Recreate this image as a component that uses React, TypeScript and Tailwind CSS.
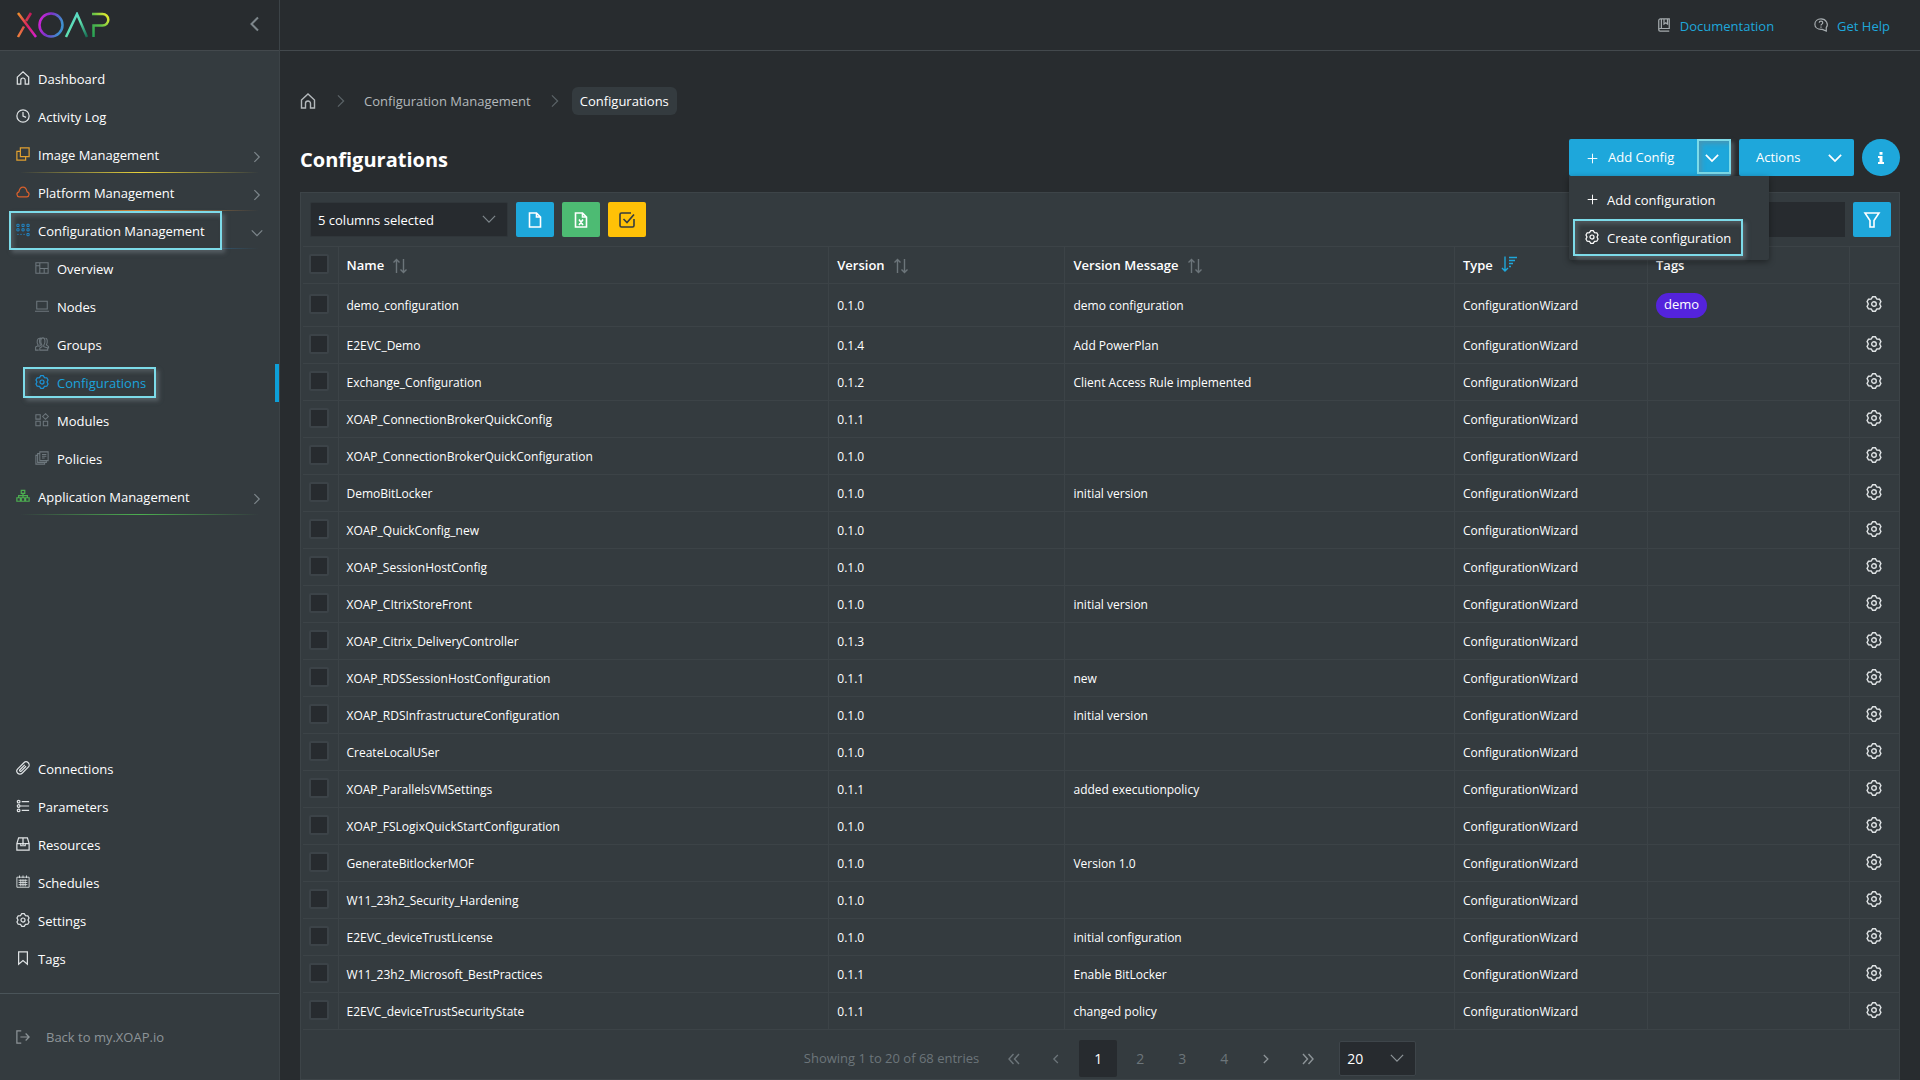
import { useState } from 'react'
import clsx from 'clsx'

// all on a 16 x 16 grid
const ICONS = {
  home: 'M1.5 7 8 1l6.5 6v8h-4V10.500a2.500 2.500 0 0 0-5 0V15h-4z',
  clock: 'M8 1a7 7 0 1 0 0 14A7 7 0 0 0 8 1zM8 3.5V8l3.500 1.500',
  copies: 'M5 1h10v10H5zM5 5H1v10h10v-4',
  cloud: 'M3.700 13.500a2.900 2.900 0 0 1-.4-5.700C4 4.500 5.500 2.500 8 2.500s4 2 4.700 5.300a2.900 2.900 0 0 1-.4 5.700z',
  nodesGrid:
    'M1 1.500h2.500V4H1zM6.800 1.500h2.500V4H6.800zM12.500 1.500H15V4h-2.500zM1 6.500h2.500V9H1zM6.800 6.500h2.500V9H6.800zM12.500 6.500H15V9h-2.500zM1.500 13h1.500M5 13h1.500M8.500 13H10M12.500 12H15v2.500h-2.500z',
  overview: 'M1 2h14v12H1zM5.500 2v12M1 5.500h4.500M5.500 8.500H15M10.500 8.500V14',
  laptop: 'M2 2.500h12v9H2zM0 14h16',
  groups:
    'M6 8.500C4.500 5.500 5 1 7 1M10 9.500c2-2.500 2-8.500-1-8.500s-3 6-1 8.500V11l-2.500 1.500V15h9v-2.500L10 11zM12 1.500c2.500 0 2.500 5 1 7.500l2.500 2V13M6 8.500V10l-2 1M5.500 1.500C2.500 1 1.500 6 3.500 9v1L.7 11.500V15h3.500',
  cog: 'M6.600.8h2.800l1.450 2.250 2.650.15 1.400 2.400L13.700 8l1.200 2.400-1.400 2.400-2.650.15-1.450 2.250H6.600l-1.450-2.250-2.650-.15-1.400-2.400L2.300 8 1.100 5.600l1.400-2.400 2.650-.15zM8 5.700a2.300 2.300 0 1 0 0 4.600 2.300 2.300 0 0 0 0-4.600z',
  modules: 'M1 2h5v5H1zM1 9.500h5v5H1zM9.500 9.500h5v5h-5zM12 .8 15.200 4 12 7.200 8.800 4z',
  policies: 'M5.500 1H15v10H5.500zM5.500 3H3v10h10v-2M3 5H1v10h10v-2M8 4h5M8 6h5M8 8h3',
  sitemap: 'M6 1.500h4V5H6zM8 5v5M3 10V7.500h10V10M1 10h4v4H1zM6 10h4v4H6zM11 10h4v4h-4z',
  link: 'M9 2 2 9a3.500 3.500 0 0 0 5 5l7-7a3.500 3.500 0 0 0-5-5zM10 4.500l-5.500 5.500a1 1 0 0 0 1.500 1.500L11.500 6',
  list: 'M6.500 3H15M5 8h10M6.500 13H15M3 1.500a1.500 1.500 0 1 0 0 3 1.500 1.500 0 0 0 0-3zM3 6.500a1.500 1.500 0 1 0 0 3 1.500 1.500 0 0 0 0-3zM3 11.500a1.500 1.500 0 1 0 0 3 1.500 1.500 0 0 0 0-3z',
  box: 'M1 7.500 3 1h10l2 6.500V15H1zM1 7.500h4.500V10h5V7.500H15M8 1v7M6.500 7 8 8.500 9.500 7',
  calendar: 'M1 2.500h14V14H1zM4 .5v3M8 .5v3M12 .5v3M3 6h10M3 8.500h10M3 11h10M5.500 5v8M8 5v8M10.500 5v8',
  bookmark: 'M3 1h10v14l-5-4-5 4z',
  logout: 'M6 1H1v14h5M5 8h10M11 4l4 4-4 4',
  book: 'M2 13V3a2 2 0 0 1 2-2h10v11H3.500a1.500 1.500 0 0 0 0 3H14M5 1v11M8 1v6l2-1.500L12 7V1',
  help: 'M8 1C4 1 1 3.500 1 7s3 6 7 6h1.500l4.500 2V11c3-4 0-10-6-10zM6 5.500C6 3 10 3 10 5.500 10 7 8 7 8 8.500M8 9.700v1.300',
  left: 'M11 1.500 4.500 8l6.500 6.500',
  right: 'M4.500 1.500 11 8l-6.500 6.500',
  down: 'M1 4.500 8 11.500l7-7',
  plus: 'M8 1v14M1 8h14',
  file: 'M2.500 1h7l4 4v10h-11zM9.500 1v4h4',
  excel: 'M2.500 1h7l4 4v10h-11zM9.500 1v4h4M6 7.500l4 5.500M10 7.500 6 13',
  check:
    'M15 7v6.500a1.500 1.500 0 0 1-1.500 1.500h-11A1.500 1.500 0 0 1 1 13.500v-11A1.500 1.500 0 0 1 2.500 1H12M4.500 7 8 10.500 15 2.500',
  filter: 'M1 1h14l-5 7.500V15H6V8.500z',
  sort: 'M4.500 15V1.500M1.500 4.500l3-3 3 3M11.500 1v13.500M8.500 11.500l3 3 3-3',
  sortDesc: 'M4 .5V15M1 12l3 3 3-3M8 1.500h8M8 4.500h6M8 7.500h4M8 10.500h2',
  first: 'M7.500 3 3 8l4.500 5M13 3 8.500 8l4.500 5',
  last: 'M3 3l4.500 5L3 13M8.500 3 13 8l-4.500 5',
}

type IconName = keyof typeof ICONS

type IconProps = {
  name: IconName
  className?: string
  strokeWidth?: number
}

function Icon({ name, className, strokeWidth = 1.4 }: IconProps) {
  return (
    <svg
      viewBox="0 0 16 16"
      fill="none"
      stroke="currentColor"
      strokeWidth={strokeWidth}
      className={clsx('shrink-0 overflow-visible', className)}
      aria-hidden="true"
    >
      <path d={ICONS[name]} />
    </svg>
  )
}

function Logo() {
  return (
    <svg viewBox="0 0 94 26" fill="none" strokeWidth="2.500" className="h-[26px] w-[94px]" role="img" aria-label="XOAP">
      <defs>
        <linearGradient id="logoX1" x1="0" y1="0" x2="1" y2="1">
          <stop offset="0" stopColor="#f0922b" />
          <stop offset="0.5" stopColor="#e0245e" />
          <stop offset="1" stopColor="#d31fd0" />
        </linearGradient>
        <linearGradient id="logoX2" x1="1" y1="0" x2="0" y2="1">
          <stop offset="0" stopColor="#c2185b" />
          <stop offset="1" stopColor="#f0803b" />
        </linearGradient>
        <linearGradient id="logoO" x1="0" y1="0" x2="1" y2="0.3">
          <stop offset="0" stopColor="#e01fd8" />
          <stop offset="0.5" stopColor="#7a35c9" />
          <stop offset="1" stopColor="#3f8fd0" />
        </linearGradient>
        <linearGradient id="logoA" x1="0" y1="0" x2="1" y2="1">
          <stop offset="0" stopColor="#55d3d8" />
          <stop offset="0.5" stopColor="#5fe0b0" />
          <stop offset="1" stopColor="#146b50" />
        </linearGradient>
        <linearGradient id="logoP" x1="0" y1="1" x2="1" y2="0">
          <stop offset="0" stopColor="#1f9d57" />
          <stop offset="0.5" stopColor="#5cbf4a" />
          <stop offset="1" stopColor="#f0ee2c" />
        </linearGradient>
      </defs>
      <path d="M2 1l18 24" stroke="url(#logoX1)" />
      <path d="M15 1l-5 8M8 14.500 2 25" stroke="url(#logoX2)" />
      <circle cx="35" cy="13" r="11.500" stroke="url(#logoO)" />
      <path d="M50 25 61 2l10 23" stroke="url(#logoA)" />
      <path d="M76 2h10.500a5.800 5.800 0 0 1 0 11.600H77.500V25" stroke="url(#logoP)" />
    </svg>
  )
}

type NavItem = {
  label: string
  icon: IconName
  color?: string
  open?: boolean
  line?: string
}

const mainNav: NavItem[] = [
  { label: 'Dashboard', icon: 'home' },
  { label: 'Activity Log', icon: 'clock' },
  { label: 'Image Management', icon: 'copies', color: 'text-[#e0a030]', line: 'via-[#e8d23a]' },
  { label: 'Platform Management', icon: 'cloud', color: 'text-[#d9602c]', line: 'via-[#d98a3a]' },
  {
    label: 'Configuration Management',
    icon: 'nodesGrid',
    color: 'text-[#1f8fd6]',
    open: true,
    line: 'via-[#2a86c4]',
  },
]

const subNav: NavItem[] = [
  { label: 'Overview', icon: 'overview' },
  { label: 'Nodes', icon: 'laptop' },
  { label: 'Groups', icon: 'groups' },
  { label: 'Configurations', icon: 'cog', open: true },
  { label: 'Modules', icon: 'modules' },
  { label: 'Policies', icon: 'policies' },
]

const applicationNav: NavItem = {
  label: 'Application Management',
  icon: 'sitemap',
  color: 'text-[#4caf50]',
  line: 'via-[#4caf50]',
}

const bottomNav: NavItem[] = [
  { label: 'Connections', icon: 'link' },
  { label: 'Parameters', icon: 'list' },
  { label: 'Resources', icon: 'box' },
  { label: 'Schedules', icon: 'calendar' },
  { label: 'Settings', icon: 'cog' },
  { label: 'Tags', icon: 'bookmark' },
]

// bright frame that marks the steps of the tour
function Frame({ className }: { className: string }) {
  return (
    <span
      className={clsx(
        'pointer-events-none absolute border-2 border-[#7ddbe9] shadow-[3px_3px_4px_rgba(120,130,135,0.5),inset_3px_3px_4px_rgba(120,130,135,0.4)]',
        className
      )}
    />
  )
}

function NavLink({ item }: { item: NavItem }) {
  return (
    <li className="relative">
      <a href="#" className="flex h-[38px] items-center gap-2 px-4 pt-[2px] text-white">
        <Icon
          name={item.icon}
          strokeWidth={item.icon === 'calendar' || item.icon === 'nodesGrid' ? 1 : 1.4}
          className={clsx('mb-1 size-[14px]', item.color ?? 'text-[#dfe3e5]')}
        />
        <span className="flex-1 whitespace-nowrap">{item.label}</span>
        {item.line ? (
          <Icon name={item.open ? 'down' : 'right'} className="mt-[2px] size-3 text-[#7d868b]" strokeWidth={1.6} />
        ) : null}
      </a>
      {item.line ? (
        <span
          className={clsx(
            'absolute right-5 bottom-px left-5 h-px bg-linear-to-r from-transparent to-transparent',
            item.line
          )}
        />
      ) : null}
      {item.open ? <Frame className="top-[-1px] left-[9px] h-[39px] w-[213px]" /> : null}
    </li>
  )
}

function SubLink({ item }: { item: NavItem }) {
  return (
    <li className="relative">
      <a
        href="#"
        className={clsx(
          'flex h-[38px] items-center gap-2 pt-[2px] pl-[35px]',
          item.open ? 'border-r-4 border-[#0d9fd8] text-[#1ba3dc]' : 'text-white'
        )}
      >
        <Icon
          name={item.icon}
          strokeWidth={item.open ? 1.4 : 1.2}
          className={clsx('mb-1 size-[14px]', item.open ? 'text-[#1b93d8]' : 'text-[#6d777d]')}
        />
        {item.label}
      </a>
      {item.open ? <Frame className="top-[3px] left-[23px] h-[31px] w-[133px]" /> : null}
    </li>
  )
}

function Sidebar() {
  return (
    <aside className="sticky top-0 flex h-screen w-[280px] shrink-0 flex-col border-r border-[#3c4347] bg-[#343b3f]">
      <div className="flex h-[51px] shrink-0 items-start justify-between border-b border-[#43494d] bg-[#282c2f] pt-3 pr-4 pl-4">
        <Logo />
        <button type="button" aria-label="Collapse menu" className="pt-1 text-[#7d868b]">
          <Icon name="left" className="size-4" strokeWidth={2} />
        </button>
      </div>
      <nav className="flex flex-1 flex-col pt-[9px] pb-[15px]">
        <ul>
          {mainNav.map((item) => (
            <NavLink key={item.label} item={item} />
          ))}
          {subNav.map((item) => (
            <SubLink key={item.label} item={item} />
          ))}
          <NavLink item={applicationNav} />
        </ul>
        <ul className="mt-auto">
          {bottomNav.map((item) => (
            <NavLink key={item.label} item={item} />
          ))}
        </ul>
      </nav>
      <div className="h-[87px] shrink-0 border-t border-[#4a5459]">
        <a href="#" className="flex h-[86px] items-center gap-4 pt-[2px] pl-4 text-[#8d9498]">
          <Icon name="logout" className="mb-[2px] size-[14px]" />
          Back to my.XOAP.io
        </a>
      </div>
    </aside>
  )
}

type Config = {
  name: string
  version: string
  message?: string
  tag?: string
}

const configs: Config[] = [
  { name: 'demo_configuration', version: '0.1.0', message: 'demo configuration', tag: 'demo' },
  { name: 'E2EVC_Demo', version: '0.1.4', message: 'Add PowerPlan' },
  { name: 'Exchange_Configuration', version: '0.1.2', message: 'Client Access Rule implemented' },
  { name: 'XOAP_ConnectionBrokerQuickConfig', version: '0.1.1' },
  { name: 'XOAP_ConnectionBrokerQuickConfiguration', version: '0.1.0' },
  { name: 'DemoBitLocker', version: '0.1.0', message: 'initial version' },
  { name: 'XOAP_QuickConfig_new', version: '0.1.0' },
  { name: 'XOAP_SessionHostConfig', version: '0.1.0' },
  { name: 'XOAP_CItrixStoreFront', version: '0.1.0', message: 'initial version' },
  { name: 'XOAP_Citrix_DeliveryController', version: '0.1.3' },
  { name: 'XOAP_RDSSessionHostConfiguration', version: '0.1.1', message: 'new' },
  { name: 'XOAP_RDSInfrastructureConfiguration', version: '0.1.0', message: 'initial version' },
  { name: 'CreateLocalUSer', version: '0.1.0' },
  { name: 'XOAP_ParallelsVMSettings', version: '0.1.1', message: 'added executionpolicy' },
  { name: 'XOAP_FSLogixQuickStartConfiguration', version: '0.1.0' },
  { name: 'GenerateBitlockerMOF', version: '0.1.0', message: 'Version 1.0' },
  { name: 'W11_23h2_Security_Hardening', version: '0.1.0' },
  { name: 'E2EVC_deviceTrustLicense', version: '0.1.0', message: 'initial configuration' },
  { name: 'W11_23h2_Microsoft_BestPractices', version: '0.1.1', message: 'Enable BitLocker' },
  { name: 'E2EVC_deviceTrustSecurityState', version: '0.1.1', message: 'changed policy' },
]

const BORDERS = 'border-b border-l border-[#3c4347]'
const CELL = clsx(BORDERS, 'px-2 pt-[2px] text-left')
const CHECK_CELL = 'border-b border-[#3c4347] pb-[2px] pl-[6px]'

function Checkbox({ label }: { label: string }) {
  return (
    <input
      type="checkbox"
      aria-label={label}
      className="block size-5 appearance-none rounded-xs border-2 border-[#3c4348] bg-[#272b2f] checked:bg-[#1ea7db]"
    />
  )
}

function SortHeader({ label, active }: { label: string; active?: boolean }) {
  return (
    <th scope="col" className={clsx(CELL, 'font-semibold')}>
      <button type="button" className="flex items-center gap-2">
        {label}
        <Icon
          name={active ? 'sortDesc' : 'sort'}
          className={clsx('size-4', active ? 'mb-1 text-[#1ea7db]' : 'text-[#6c757a]')}
        />
      </button>
    </th>
  )
}

function ConfigTable() {
  return (
    <table className="w-full table-fixed border-collapse border-t border-[#3c4347] text-xs text-white">
      <colgroup>
        <col className="w-[35px]" />
        <col className="w-[30.75%]" />
        <col className="w-[14.8%]" />
        <col className="w-[24.4%]" />
        <col className="w-[12.1%]" />
        <col />
        <col className="w-[50px]" />
      </colgroup>
      <thead className="text-[13px]">
        <tr className="h-[37px]">
          <th className={CHECK_CELL}>
            <Checkbox label="Select all" />
          </th>
          <SortHeader label="Name" />
          <SortHeader label="Version" />
          <SortHeader label="Version Message" />
          <SortHeader label="Type" active />
          <th scope="col" className={clsx(CELL, 'font-semibold')}>Tags</th>
          <th className={CELL} />
        </tr>
      </thead>
      <tbody>
        {configs.map((config) => (
          <tr key={config.name} className={config.tag ? 'h-[43px]' : 'h-[37px]'}>
            <td className={CHECK_CELL}>
              <Checkbox label={`Select ${config.name}`} />
            </td>
            <td className={CELL}>{config.name}</td>
            <td className={CELL}>{config.version}</td>
            <td className={CELL}>{config.message}</td>
            <td className={CELL}>ConfigurationWizard</td>
            <td className={clsx(BORDERS, 'px-2')}>
              {config.tag ? (
                <span className="inline-flex h-[25px] items-center rounded-full bg-[#5423dc] px-2 text-[13px]">
                  {config.tag}
                </span>
              ) : null}
            </td>
            <td className={clsx(BORDERS, 'pb-[2px]')}>
              <button type="button" aria-label={`Settings of ${config.name}`} className="mx-auto block text-[#dfe3e5]">
                <Icon name="cog" className="size-4" />
              </button>
            </td>
          </tr>
        ))}
      </tbody>
    </table>
  )
}

function Paginator() {
  const [page, setPage] = useState(1)
  const pageButton = 'flex h-[37px] w-[38px] items-center justify-center rounded-xs text-sm'

  return (
    <div className="flex items-center justify-center gap-1 pt-[10px] pb-[2px] pl-[18px] text-[#6c757a]">
      <span className="mr-3">Showing 1 to 20 of 68 entries</span>
      <button type="button" aria-label="First page" className={pageButton}>
        <Icon name="first" className="size-4" />
      </button>
      <button type="button" aria-label="Previous page" className={pageButton}>
        <Icon name="left" className="size-[10px]" strokeWidth={2} />
      </button>
      {[1, 2, 3, 4].map((n) => (
        <button
          key={n}
          type="button"
          onClick={() => setPage(n)}
          className={clsx(pageButton, n === page && 'bg-[#272b2f] text-white')}
        >
          {n}
        </button>
      ))}
      <button type="button" aria-label="Next page" className={clsx(pageButton, 'text-[#8d9498]')}>
        <Icon name="right" className="size-[10px]" strokeWidth={2} />
      </button>
      <button type="button" aria-label="Last page" className={clsx(pageButton, 'text-[#8d9498]')}>
        <Icon name="last" className="size-4" />
      </button>
      <div className="relative ml-2">
        <select
          aria-label="Rows per page"
          className="h-[35px] w-[77px] appearance-none rounded-xs border border-[#3e454a] bg-[#272b2f] pl-[7px] text-sm text-white"
          defaultValue="20"
        >
          <option>10</option>
          <option>20</option>
          <option>50</option>
        </select>
        <Icon name="down" className="pointer-events-none absolute top-[10px] right-3 size-[14px] text-[#8d9498]" />
      </div>
    </div>
  )
}

const TOOL_BUTTON = 'flex h-[35px] w-[38px] items-center justify-center rounded-xs'

function Toolbar() {
  return (
    <div className="flex items-center gap-2 py-[9px] pr-2 pl-[7px]">
      <div className="relative">
        <select
          aria-label="Columns"
          className="block h-[35px] w-[198px] appearance-none rounded-xs border border-[#30363a] bg-[#272b2f] pt-[2px] pl-[7px] text-white"
        >
          <option>5 columns selected</option>
        </select>
        <Icon name="down" className="pointer-events-none absolute top-[10px] right-3 size-[14px] text-[#7d868b]" />
      </div>
      <button type="button" aria-label="Export as CSV" className={clsx(TOOL_BUTTON, 'bg-[#1ea7db] text-white')}>
        <Icon name="file" className="size-4" strokeWidth={1.6} />
      </button>
      <button type="button" aria-label="Export as Excel" className={clsx(TOOL_BUTTON, 'bg-[#4dbb73] text-white')}>
        <Icon name="excel" className="size-4" strokeWidth={1.6} />
      </button>
      <button type="button" aria-label="Export selection" className={clsx(TOOL_BUTTON, 'bg-[#ffc107] text-[#343b3f]')}>
        <Icon name="check" className="size-4" strokeWidth={1.6} />
      </button>
      <input
        type="text"
        aria-label="Search"
        className="ml-auto h-[35px] w-[240px] bg-[#272b2f] px-2 text-white outline-none"
      />
      <button type="button" aria-label="Filter" className={clsx(TOOL_BUTTON, 'bg-[#1ea7db] text-white')}>
        <Icon name="filter" className="size-4" strokeWidth={1.6} />
      </button>
    </div>
  )
}

function AddConfigMenu() {
  const menuItem = 'flex h-[38px] w-full items-center gap-2 pt-[2px] pl-4'

  return (
    <ul
      role="menu"
      className="absolute top-full left-0 z-10 w-[200px] rounded-b-xs bg-[#343b3f] pt-[5px] pb-[3px] text-white shadow-[0_2px_6px_rgba(0,0,0,0.4)]"
    >
      <li>
        <button type="button" role="menuitem" className={menuItem}>
          <span className="mb-1 flex w-[14px] justify-center">
            <Icon name="plus" className="size-[11px]" />
          </span>
          Add configuration
        </button>
      </li>
      <li className="relative">
        <button type="button" role="menuitem" className={menuItem}>
          <Icon name="cog" className="mb-1 size-[14px]" />
          Create configuration
        </button>
        <Frame className="top-0 left-1 h-[37px] w-[170px]" />
      </li>
    </ul>
  )
}

export default function App() {
  const [menuOpen, setMenuOpen] = useState(true)

  return (
    <div className="flex min-h-screen bg-[#282c2f] font-['Open_Sans','Noto_Sans',sans-serif] text-[13px]">
      <Sidebar />
      <div className="flex min-w-0 flex-1 flex-col">
        <header className="flex h-[51px] shrink-0 items-center justify-end gap-10 border-b border-[#43494d] pt-[3px] pr-[30px] text-[#1ea7db]">
          <a href="#" className="flex items-center gap-[9px]">
            <Icon name="book" className="mb-1 size-[14px] text-[#a5abae]" />
            Documentation
          </a>
          <a href="#" className="flex items-center gap-[9px]">
            <Icon name="help" className="mb-1 size-[14px] text-[#a5abae]" />
            Get Help
          </a>
        </header>

        <main className="flex-1 px-5 pt-9">
          <nav aria-label="Breadcrumb" className="flex h-7 items-center text-[#b4b9bc]">
            <a href="#" aria-label="Home">
              <Icon name="home" className="size-4" />
            </a>
            <Icon name="right" className="mx-4 ml-[18px] size-[14px] text-[#5b6367]" />
            <a href="#" className="pt-[2px]">Configuration Management</a>
            <Icon name="right" className="mr-[10px] ml-[17px] size-[14px] text-[#5b6367]" />
            <span className="rounded-md bg-[#343b3f] px-2 pt-[5px] pb-[3px] text-white">Configurations</span>
          </nav>

          <div className="flex items-start justify-between pt-6 pb-4">
            <h1 className="pt-[5px] text-xl leading-8 font-bold text-white">Configurations</h1>
            <div className="flex gap-2 text-white">
              <div className="relative flex h-[37px]">
                <button type="button" className="flex w-32 items-center gap-[10px] rounded-l-xs bg-[#1ea7db] pt-px pl-[18px]">
                  <Icon name="plus" className="size-[11px]" />
                  Add Config
                </button>
                <button
                  type="button"
                  aria-label="More add options"
                  onClick={() => setMenuOpen(!menuOpen)}
                  className="relative flex w-[34px] items-center rounded-r-xs bg-[#1ea7db] pl-2"
                >
                  <Icon name="down" className="size-[14px]" strokeWidth={2} />
                  <Frame className="inset-x-0 top-0 h-[35px]" />
                </button>
                {menuOpen ? <AddConfigMenu /> : null}
              </div>
              <button
                type="button"
                className="flex h-[37px] w-[115px] items-center justify-between rounded-xs bg-[#1ea7db] pt-px pr-3 pl-[17px]"
              >
                Actions
                <Icon name="down" className="size-[14px]" strokeWidth={2} />
              </button>
              <button
                type="button"
                aria-label="Information"
                className="flex h-[37px] w-[38px] items-center justify-center rounded-full bg-[#1ea7db]"
              >
                <svg viewBox="0 0 6 12" fill="currentColor" className="h-3 w-[6px]" aria-hidden="true">
                  <path d="M1.500 0h3v2.800h-3zM0 4h4.500v6H6v2H0v-2h1.500V6H0z" />
                </svg>
              </button>
            </div>
          </div>

          <section className="border border-[#3d4448] bg-[#343b3f] pl-[2px]">
            <Toolbar />
            <ConfigTable />
            <Paginator />
          </section>
        </main>
      </div>
    </div>
  )
}
